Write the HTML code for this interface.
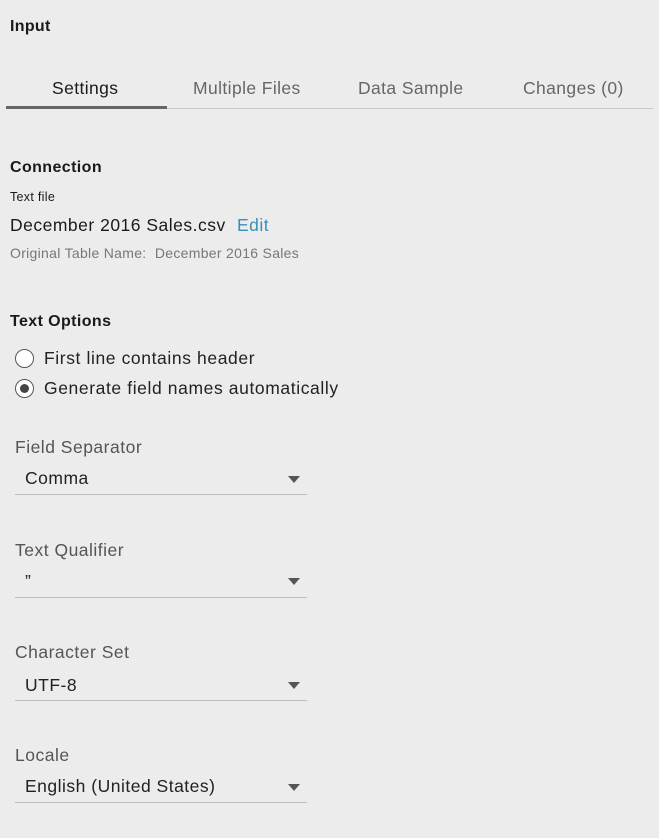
<!DOCTYPE html><html><head><style>
body{margin:0;width:659px;height:838px;background:#ececec;font-family:"Liberation Sans",sans-serif;position:relative;overflow:hidden;color:#1a1a1a}
.a{position:absolute;white-space:nowrap;line-height:1}
.b{font-weight:bold}
.tab{font-size:17.5px;color:#666;top:80px;letter-spacing:0.4px}
.lbl{font-size:17.5px;color:#555;left:15px;letter-spacing:0.5px}
.val{font-size:17.5px;color:#222;left:25px;letter-spacing:0.5px}
.ln{position:absolute;left:15px;width:292px;height:1px;background:#bdbdbd}
.ar{position:absolute;left:288px;width:0;height:0;border-left:6px solid transparent;border-right:6px solid transparent;border-top:7px solid #555}
.rad{position:absolute;left:15px;width:19px;height:19px;border:1.5px solid #555;border-radius:50%;background:#fff;box-sizing:border-box}
</style></head><body>
<div class="a b" style="left:10px;top:19px;font-size:16px;letter-spacing:0.3px">Input</div>
<div class="a tab" style="left:52px;color:#1a1a1a">Settings</div>
<div class="a tab" style="left:193px">Multiple Files</div>
<div class="a tab" style="left:358px">Data Sample</div>
<div class="a tab" style="left:523px">Changes (0)</div>
<div style="position:absolute;left:6px;top:108px;width:647px;height:1px;background:#c8c8c8"></div>
<div style="position:absolute;left:6px;top:106px;width:161px;height:3px;background:#666"></div>
<div class="a b" style="left:10px;top:160px;font-size:16px;letter-spacing:0.4px">Connection</div>
<div class="a" style="left:10px;top:191px;font-size:12.5px;letter-spacing:0.3px">Text file</div>
<div class="a" style="left:10px;top:217px;font-size:17.5px;letter-spacing:0.5px">December 2016 Sales.csv</div>
<div class="a" style="left:237px;top:217px;font-size:17.5px;color:#3a8fb7;letter-spacing:0.5px">Edit</div>
<div class="a" style="left:10px;top:246px;font-size:14px;color:#777;letter-spacing:0.3px">Original Table Name:&nbsp; December 2016 Sales</div>
<div class="a b" style="left:10px;top:314px;font-size:16px;letter-spacing:0.4px">Text Options</div>
<div class="rad" style="top:349px"></div>
<div class="a" style="left:44px;top:350px;font-size:17.5px;color:#222;letter-spacing:0.6px">First line contains header</div>
<div class="rad" style="top:379px"></div>
<div style="position:absolute;left:20px;top:384px;width:9px;height:9px;border-radius:50%;background:#444"></div>
<div class="a" style="left:44px;top:380px;font-size:17.5px;color:#222;letter-spacing:0.6px">Generate field names automatically</div>
<div class="a lbl" style="top:439px">Field Separator</div>
<div class="a val" style="top:470px">Comma</div>
<div class="ar" style="top:476px"></div><div class="ln" style="top:494px"></div>
<div class="a lbl" style="top:542px">Text Qualifier</div>
<div class="a val" style="top:573px">”</div>
<div class="ar" style="top:578px"></div><div class="ln" style="top:597px"></div>
<div class="a lbl" style="top:644px">Character Set</div>
<div class="a val" style="top:677px">UTF-8</div>
<div class="ar" style="top:682px"></div><div class="ln" style="top:700px"></div>
<div class="a lbl" style="top:747px">Locale</div>
<div class="a val" style="top:778px">English (United States)</div>
<div class="ar" style="top:784px"></div><div class="ln" style="top:802px"></div>
</body></html>
